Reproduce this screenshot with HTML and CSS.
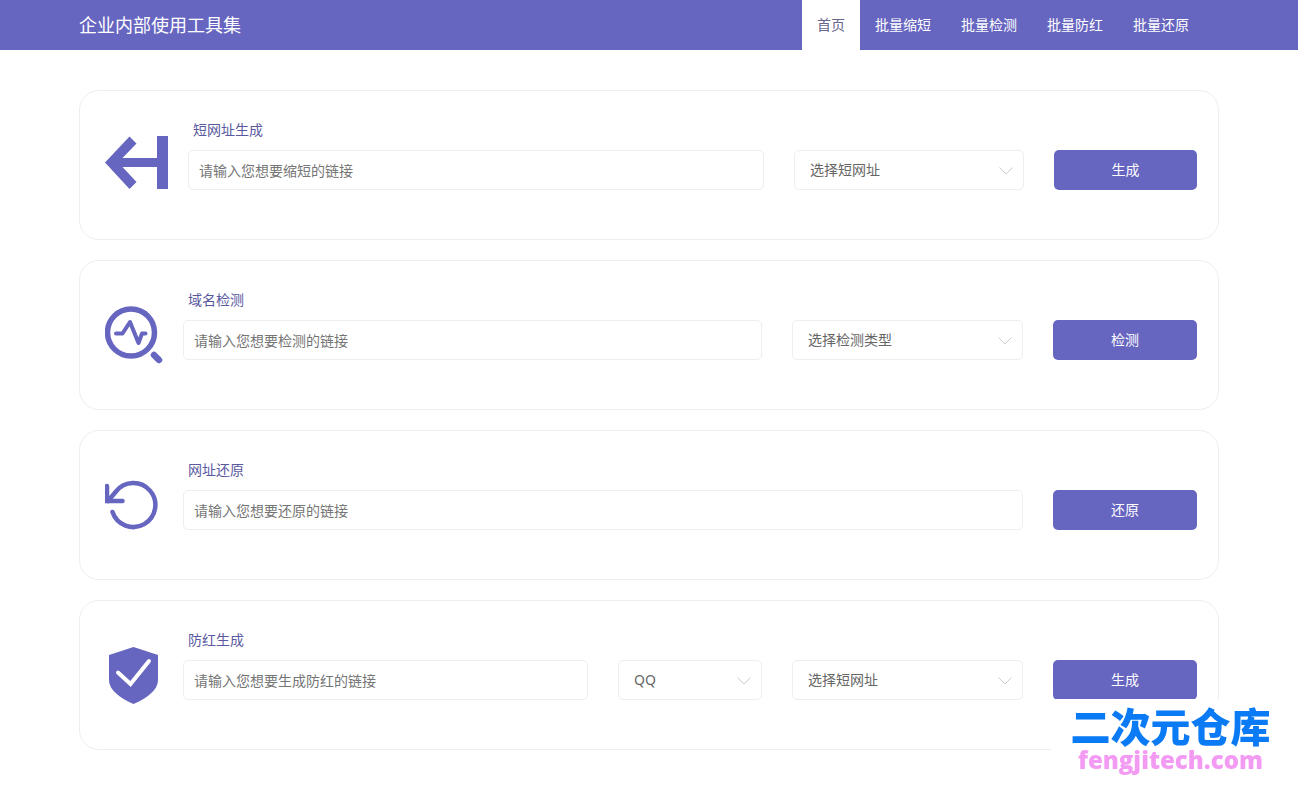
FILE: index.html
```html
<!DOCTYPE html>
<html lang="zh-CN">
<head>
<meta charset="utf-8">
<meta name="viewport" content="width=device-width, initial-scale=1">
<title>企业内部使用工具集</title>
<link rel="stylesheet" href="styles.css">
</head>
<body>
<header class="header">
  <div class="container header-inner">
    <h1 class="brand">企业内部使用工具集</h1>
    <nav class="nav">
      <a class="nav-link active" href="#">首页</a>
      <a class="nav-link" href="#">批量缩短</a>
      <a class="nav-link" href="#">批量检测</a>
      <a class="nav-link" href="#">批量防红</a>
      <a class="nav-link" href="#">批量还原</a>
    </nav>
  </div>
</header>

<main class="container cards">
  <section class="card">
    <svg class="icon icon-wide" viewBox="0 0 63 64" aria-hidden="true">
      <path fill="#6665c0" d="M52 5h11v53H52V36H17.500L31.500 51l-7 7L0 31.500 24.500 5.500l7 7L17.500 27H52z"/>
    </svg>
    <form class="tool">
      <label class="title" for="short-url">短网址生成</label>
      <div class="fields">
        <input class="field span-7" id="short-url" type="text" placeholder="请输入您想要缩短的链接">
        <div class="select span-3">
          <select class="field" aria-label="选择短网址"><option>选择短网址</option></select>
          <svg class="chevron" viewBox="0 0 14 8" aria-hidden="true"><path d="M.5 .5L7 7 13.500 .5"/></svg>
        </div>
        <button class="btn span-2" type="button">生成</button>
      </div>
    </form>
  </section>

  <section class="card">
    <svg class="icon" viewBox="0 0 58 64" fill="none" stroke="#6665c0" stroke-linecap="round" stroke-linejoin="round" aria-hidden="true">
      <circle cx="26" cy="31.500" r="23.500" stroke-width="5.500"/>
      <path stroke-width="4" d="M11 32.500h6.500L25 21l8.500 21 3.500-9.500h3.500"/>
      <path stroke-width="6.500" d="M49 54l5 5"/>
    </svg>
    <form class="tool">
      <label class="title" for="check-url">域名检测</label>
      <div class="fields">
        <input class="field span-7" id="check-url" type="text" placeholder="请输入您想要检测的链接">
        <div class="select span-3">
          <select class="field" aria-label="选择检测类型"><option>选择检测类型</option></select>
          <svg class="chevron" viewBox="0 0 14 8" aria-hidden="true"><path d="M.5 .5L7 7 13.500 .5"/></svg>
        </div>
        <button class="btn span-2" type="button">检测</button>
      </div>
    </form>
  </section>

  <section class="card">
    <svg class="icon" viewBox="0 0 58 64" fill="none" stroke="#6665c0" stroke-width="4.500" stroke-linecap="round" aria-hidden="true">
      <path d="M7.500 41A22 22 0 1 0 11 20.500L3 30"/>
      <path d="M2 15v15h15.500"/>
    </svg>
    <form class="tool">
      <label class="title" for="restore-url">网址还原</label>
      <div class="fields">
        <input class="field span-10" id="restore-url" type="text" placeholder="请输入您想要还原的链接">
        <button class="btn span-2" type="button">还原</button>
      </div>
    </form>
  </section>

  <section class="card">
    <svg class="icon" viewBox="0 0 58 64" aria-hidden="true">
      <path fill="#6665c0" d="M28.500 6L53 14v25c0 10-11 18-24.500 24C15 57 4 49 4 39V14z"/>
      <path fill="none" stroke="#fff" stroke-width="4" stroke-linecap="round" d="M13 31.500L25.500 43 44 20"/>
    </svg>
    <form class="tool">
      <label class="title" for="guard-url">防红生成</label>
      <div class="fields">
        <input class="field span-5" id="guard-url" type="text" placeholder="请输入您想要生成防红的链接">
        <div class="select span-2">
          <select class="field" aria-label="平台"><option>QQ</option></select>
          <svg class="chevron" viewBox="0 0 14 8" aria-hidden="true"><path d="M.5 .5L7 7 13.500 .5"/></svg>
        </div>
        <div class="select span-3">
          <select class="field" aria-label="选择短网址"><option>选择短网址</option></select>
          <svg class="chevron" viewBox="0 0 14 8" aria-hidden="true"><path d="M.5 .5L7 7 13.500 .5"/></svg>
        </div>
        <button class="btn span-2" type="button">生成</button>
      </div>
    </form>
  </section>
</main>

<aside class="watermark">
  <span class="mark-name">二次元仓库</span>
  <span class="mark-site">fengjitech.com</span>
</aside>
</body>
</html>
```

FILE: styles.css
```css
* {
  box-sizing: border-box;
}

body {
  margin: 0;
  background: #fff;
  color: #666;
  font: 14px/20px "Noto Sans", "Noto Sans CJK SC", sans-serif;
}

.container {
  max-width: 1140px;
  margin: 0 auto;
}

.header {
  background: #6665c0;
}

.header-inner {
  display: flex;
  justify-content: space-between;
  padding-right: 15px;
}

.brand {
  margin: 0;
  color: #fff;
  font-size: 18px;
  font-weight: 400;
  line-height: 50px;
}

.nav {
  display: flex;
}

.nav-link {
  padding: 0 15px;
  color: #fff;
  line-height: 50px;
  text-decoration: none;
}

.nav-link.active {
  background: #fff;
  color: #66658c;
}

.cards {
  display: grid;
  gap: 20px;
  padding: 40px 0;
}

.card {
  display: flex;
  align-items: flex-start;
  gap: 20px;
  min-height: 150px;
  padding: 29px 21px 29px 25px;
  border: 1px solid #eee;
  border-radius: 20px;
}

.icon {
  flex: none;
  width: 58px;
  height: 64px;
  margin-top: 11px;
}

.icon-wide {
  width: 63px;
}

.tool {
  flex: 1;
  min-width: 0;
}

.title {
  display: block;
  margin: 0 5px 10px;
  color: #5a59a0;
}

.fields {
  display: grid;
  grid-template-columns: repeat(12, minmax(0, 1fr));
  column-gap: 30px;
}

.span-2 { grid-column: span 2; }
.span-3 { grid-column: span 3; }
.span-5 { grid-column: span 5; }
.span-7 { grid-column: span 7; }
.span-10 { grid-column: span 10; }

.field {
  width: 100%;
  height: 40px;
  padding: 0 10px;
  border: 1px solid #eee;
  border-radius: 5px;
  background: #fff;
  color: #666;
  font: inherit;
}

.field::placeholder {
  color: #757575;
  opacity: 1;
}

.select {
  position: relative;
}

.select .field {
  display: block;
  padding: 0 30px 0 15px;
  appearance: none;
}

.chevron {
  position: absolute;
  top: 17px;
  right: 11px;
  width: 14px;
  height: 8px;
  fill: none;
  stroke: #ccc;
  pointer-events: none;
}

.btn {
  height: 40px;
  padding: 0;
  border: 0;
  border-radius: 5px;
  background: #6665c0;
  color: #fff;
  font: inherit;
}

.watermark {
  position: fixed;
  right: 0;
  bottom: 0;
  display: flex;
  flex-direction: column;
  align-items: center;
  width: 247px;
  height: 88px;
  padding: 6px 8px 0 0;
  background: #fff;
  white-space: nowrap;
}

.mark-name {
  color: #0a7af5;
  font: 900 40px/40px "Noto Sans CJK SC", sans-serif;
}

.mark-site {
  color: #f39bf3;
  font: 800 24px/30px "Open Sans", sans-serif;
}
```
